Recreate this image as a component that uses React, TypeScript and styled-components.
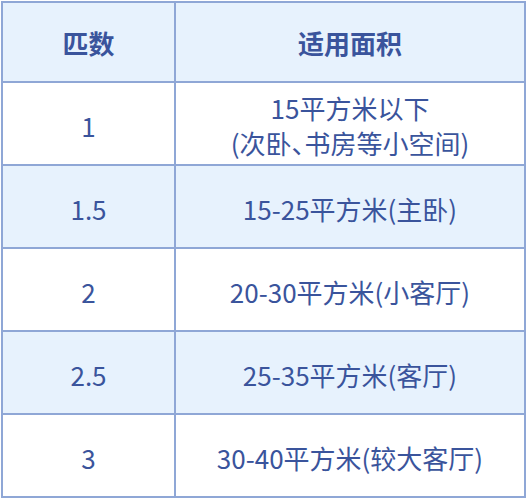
import React from 'react'
import styled, { createGlobalStyle } from 'styled-components'

const GlobalStyle = createGlobalStyle`
	html, body {
		margin: 0;
		padding: 0;
		background: #ffffff;
	}
	body {
		font-family: "Noto Sans CJK SC", "Noto Sans", sans-serif;
	}
`

const rows = [
	{ count: '1', area: ['15平方米以下', '(次卧、书房等小空间)'] },
	{ count: '1.5', area: ['15-25平方米(主卧)'] },
	{ count: '2', area: ['20-30平方米(小客厅)'] },
	{ count: '2.5', area: ['25-35平方米(客厅)'] },
	{ count: '3', area: ['30-40平方米(较大客厅)'] },
]

const App = () => {
	return (
		<>
			<GlobalStyle />
			<Page>
				<Table>
					<Cell $head $first>匹数</Cell>
					<Cell $head>适用面积</Cell>
					{rows.map((r, i) => {
						const tinted = i % 2 === 1
						const last = i === rows.length - 1
						return (
							<React.Fragment key={r.count}>
								<Cell $first $tinted={tinted} $last={last}>{r.count}</Cell>
								<Cell $tinted={tinted} $last={last}>
									<Lines>
										{r.area.map(line => <span key={line}>{line}</span>)}
									</Lines>
								</Cell>
							</React.Fragment>
						)
					})}
				</Table>
			</Page>
		</>
	)
}

export default App

const Page = styled.div`
	padding: 1px 0 0 1px;
`

const Table = styled.div`
	display: grid;
	grid-template-columns: 173px 1fr;
	grid-template-rows: 80px repeat(4, 83px) 81px;
	width: 525px;
	box-sizing: border-box;
	border: 2px solid #8fa7d6;
`

const Cell = styled.div<{ $head?: boolean; $first?: boolean; $tinted?: boolean; $last?: boolean }>`
	display: flex;
	align-items: center;
	justify-content: center;
	text-align: center;
	box-sizing: border-box;
	padding-top: ${p => (p.$head ? '0' : '3px')};
	color: #3a549c;
	background: ${p => (p.$head || p.$tinted ? '#e7f2fd' : '#ffffff')};
	font-size: 26px;
	font-weight: ${p => (p.$head ? 700 : 400)};
	font-feature-settings: "halt";
	border-right: ${p => (p.$first ? '2px solid #8fa7d6' : 'none')};
	border-bottom: ${p => (p.$last ? 'none' : '2px solid #8fa7d6')};
`

const Lines = styled.div`
	display: flex;
	flex-direction: column;
	align-items: center;
	line-height: 35px;
`
